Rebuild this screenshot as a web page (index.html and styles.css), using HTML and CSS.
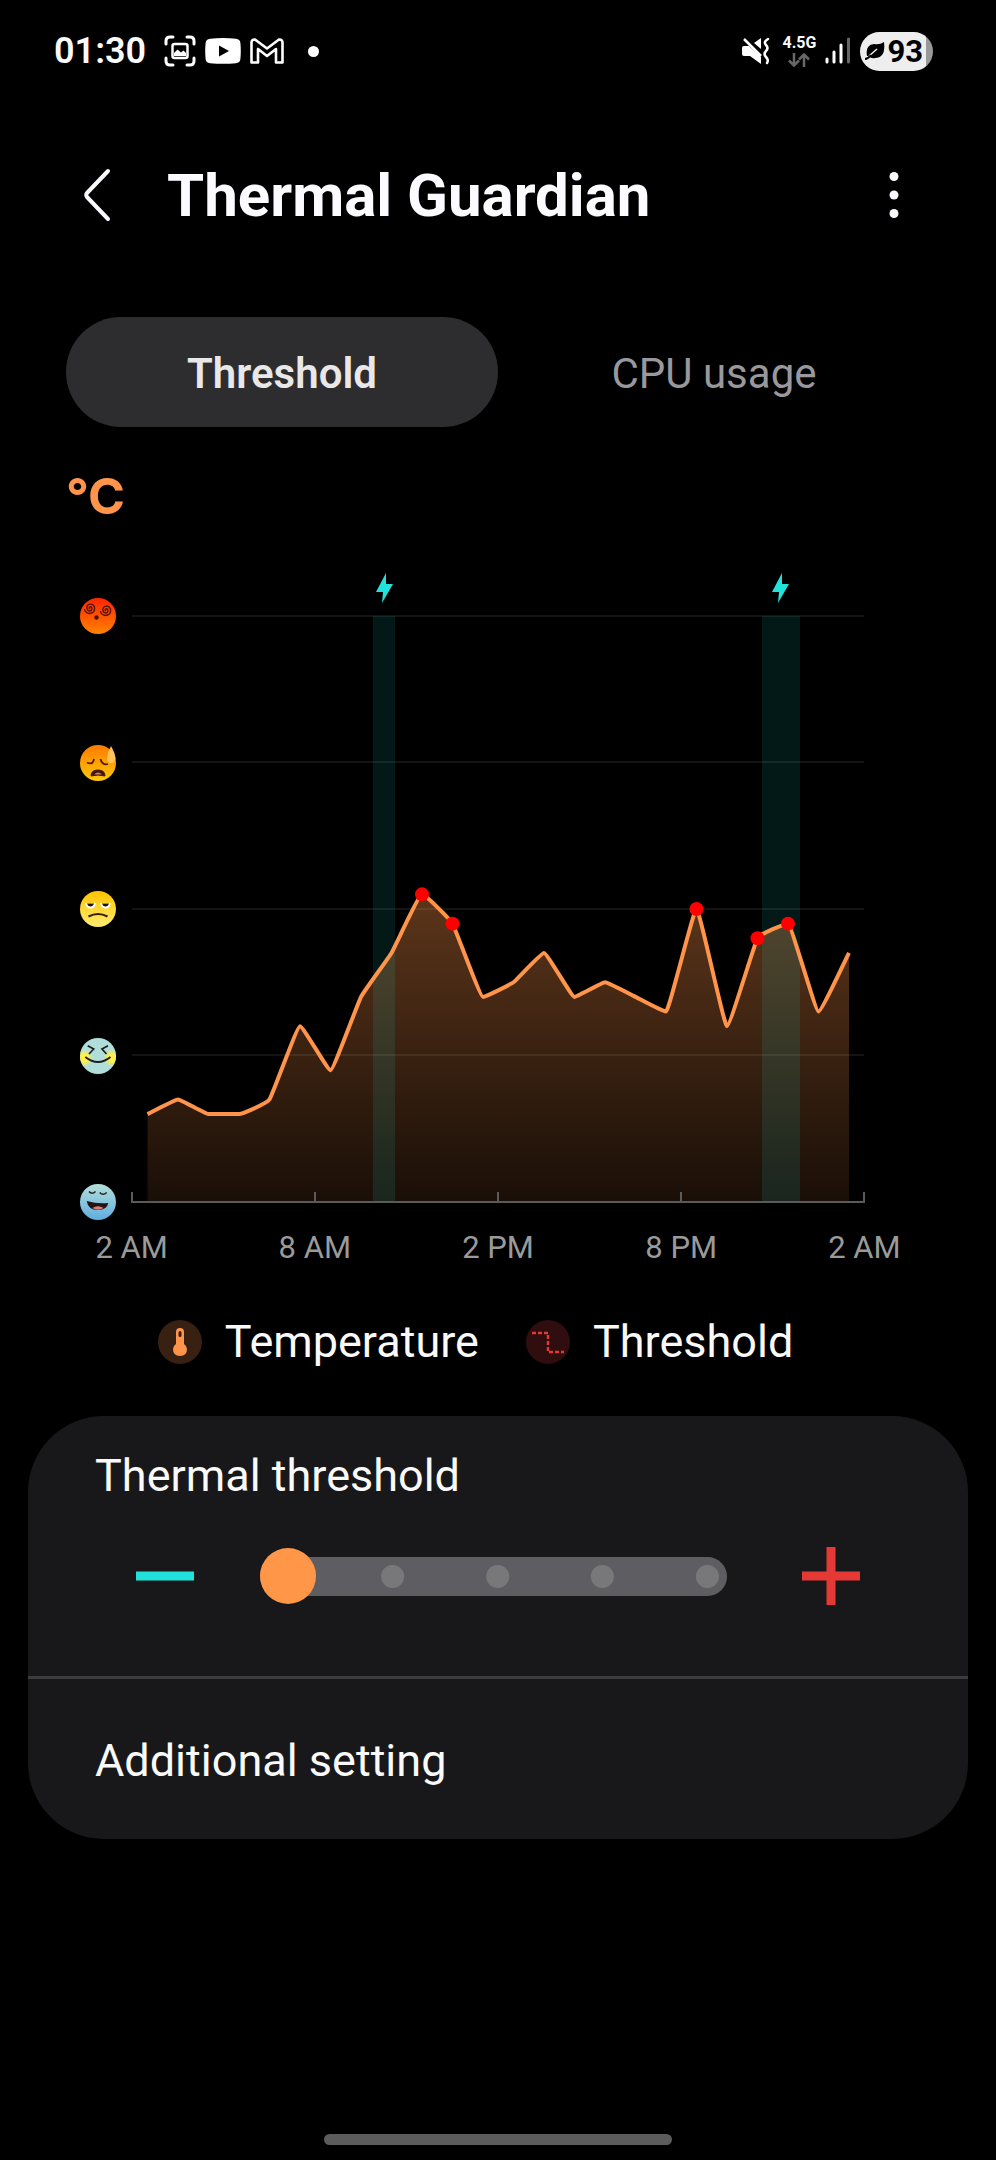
FILE: index.html
```html
<!DOCTYPE html>
<html lang="en">
<head>
  <meta charset="UTF-8" />
  <meta name="viewport" content="width=device-width, initial-scale=1.0" />
  <title>Thermal Guardian</title>
  <link rel="stylesheet" href="styles.css">
</head>
<body>

  <!-- Status bar -->
  <div class="status-bar">
    <div class="status-left">
      <span class="time">01:30</span>
      <svg width="32" height="32" viewBox="0 0 32 32" fill="none" stroke="#fff" stroke-width="3" stroke-linecap="round">
        <path d="M2 9V6Q2 2 6 2H9M23 2H26Q30 2 30 6V9M30 23V26Q30 30 26 30H23M9 30H6Q2 30 2 26V23" />
        <rect x="8.500" y="9" width="15" height="14" rx="2" stroke-width="2.500" />
        <path d="M10 21V18L13.500 14.500 17 17.500 19.500 15.500 22 18V21Z" fill="#fff" stroke="none" />
      </svg>
      <svg width="36" height="26" viewBox="0 0 36 26">
        <path d="M5 .8Q18-.6 31 .8Q35 1.200 35.400 5Q36.200 13 35.400 21Q35 24.800 31 25.200Q18 26.500 5 25.200Q1 24.800 .6 21Q-.2 13 .6 5Q1 1.200 5 .8Z" fill="#fff" />
        <path d="M14 7.500L24 13L14 18.500Z" fill="#000" />
      </svg>
      <svg width="34" height="26" viewBox="0 0 34 26" fill="none" stroke="#fff" stroke-width="2.600" stroke-linejoin="round">
        <path d="M1.500 4.500Q1.500 1.300 5 1.500L17 10.500L29 1.500Q32.500 1.300 32.500 4.500V24.500H26V11L17 18L8 11V24.500H1.500Z" />
      </svg>
      <span class="more-dot"></span>
    </div>
    <div class="status-right">
      <svg width="28" height="28" viewBox="0 0 28 28">
        <path d="M0 11Q0 9 2 9H7L19 20V27L8 19H2Q0 19 0 17Z" fill="#fff" />
        <path d="M12 6L19 1V12Z" fill="#fff" />
        <path d="M2 2L19 19" stroke="#fff" stroke-width="2.500" />
        <path d="M26 2Q21 5 24 8T24 14T24 20T25 26" fill="none" stroke="#fff" stroke-width="2.500" stroke-linecap="round" />
      </svg>
      <div class="network">
        <span>4.5G</span>
        <svg width="22" height="14" viewBox="0 0 22 14" fill="none" stroke="#686868" stroke-width="2.500">
          <path d="M6 0V12M1 7.500L6 12.500L11 7.500M16 14V2M11 6.500L16 1.500L21 6.500" />
        </svg>
      </div>
      <svg width="26" height="28" viewBox="0 0 26 28" stroke="#fff" stroke-width="3" stroke-linecap="round">
        <path d="M2 22V25M9 15V25M16 8V25" />
        <path d="M23.500 2V25" stroke="#666" />
      </svg>
      <div class="battery">
        <svg width="20" height="18" viewBox="0 0 20 18">
          <path d="M2 14Q0 3 9 2Q15 3 19 0Q21 16 10 16Q6 17 4 14Z" fill="#000" />
          <path d="M4 14L12 7" stroke="#eee" stroke-width="1.500" />
          <path d="M0 17Q3 17 6 13" fill="none" stroke="#000" stroke-width="2" />
        </svg>
        <span>93</span>
      </div>
    </div>
  </div>

  <!-- Title bar -->
  <header class="header">
    <button class="icon-button" aria-label="Back">
      <svg width="28" height="54" viewBox="0 0 28 54" fill="none" stroke="#fafaff" stroke-width="4" stroke-linecap="round" stroke-linejoin="round">
        <path d="M25 3L4 25Q2.500 27 4 29L25 51" />
      </svg>
    </button>
    <h1>Thermal Guardian</h1>
    <button class="icon-button" aria-label="More options">
      <svg width="10" height="48" viewBox="0 0 10 48" fill="#fafaff">
        <circle cx="5" cy="5.500" r="4.500" /><circle cx="5" cy="24" r="4.500" /><circle cx="5" cy="42.500" r="4.500" />
      </svg>
    </button>
  </header>

  <nav class="tabs">
    <button class="tab active">Threshold</button>
    <button class="tab">CPU usage</button>
  </nav>

  <main>
    <div class="unit">°C</div>

    <!-- Temperature chart -->
    <div class="chart">
      <div class="faces">
        <svg class="face" viewBox="0 0 36 36">
          <linearGradient id="hot" x2="0" y2="1"><stop stop-color="#ff2400" /><stop offset="1" stop-color="#ff8400" /></linearGradient>
          <circle cx="18" cy="18" r="18" fill="url(#hot)" />
          <g fill="none" stroke="#4a1208" stroke-width="1.300">
            <path d="M10 11Q8.500 10 9.500 9Q12 8 12 11Q11 14 8 12.500Q5.500 9 8.500 6.500Q13 5 14.500 9Q15.500 15 9.500 15.500Q5 15 4.500 11" />
            <path d="M26 13Q24.500 12 25.500 11Q28 10 28 13Q27 16 24 14.500Q21.500 11 24.500 8.500Q29 7 30.500 11Q31.500 17 25.500 17.500Q21 17 20.500 13" />
          </g>
          <circle cx="16.500" cy="19.500" r="2.200" fill="#4a1208" />
        </svg>
        <svg class="face" viewBox="0 0 36 36">
          <linearGradient id="warm" x2="0" y2="1"><stop stop-color="#ff7a00" /><stop offset="1" stop-color="#ffca08" /></linearGradient>
          <circle cx="18" cy="18" r="18" fill="url(#warm)" />
          <path d="M7 17.500Q13 20.500 14 14M20.500 14Q22 20.500 28 19" fill="none" stroke="#4d1d08" stroke-width="1.800" />
          <path d="M11 31Q11 25 18 25T25 31Q18 29 11 31Z" fill="#40150c" stroke="#40150c" />
          <path d="M14 29.500Q18 25.500 22 29.500Z" fill="#d57a78" />
          <path d="M31 1Q35 8 35.500 13Q35 18 31 18T27 13Q27.500 7 31 1Z" fill="#ffc45a" />
        </svg>
        <svg class="face" viewBox="0 0 36 36">
          <linearGradient id="mild" x2="0" y2="1"><stop stop-color="#ffc400" /><stop offset="1" stop-color="#ffed70" /></linearGradient>
          <circle cx="18" cy="18" r="18" fill="url(#mild)" />
          <path d="M5 12H16Q15 17.500 10.500 17.500T5 12ZM20 12H31Q30 17.500 25.500 17.500T20 12Z" fill="#fff" />
          <path d="M7 12.500H14Q13 15.500 10.500 15.500T7 12.500ZM22 12.500H29Q28 15.500 25.500 15.500T22 12.500Z" fill="#201000" />
          <path d="M8.500 25.500Q18 20.500 27.500 25.500" fill="none" stroke="#332000" stroke-width="2.200" />
        </svg>
        <svg class="face" viewBox="0 0 36 36">
          <radialGradient id="blush"><stop offset=".4" stop-color="#fff14a" /><stop offset="1" stop-color="#fff14a" stop-opacity="0" /></radialGradient>
          <clipPath id="disc"><circle cx="18" cy="18" r="18" /></clipPath>
          <g clip-path="url(#disc)">
            <rect width="36" height="36" fill="#b0dedb" />
            <circle cx="4" cy="20" r="9" fill="url(#blush)" /><circle cx="32" cy="20" r="9" fill="url(#blush)" />
          </g>
          <path d="M7.700 7.700L13.700 11L9 16M28 7.700L22 11L26.500 16M5.300 19Q18 29 30.500 19" fill="none" stroke="#221c1c" stroke-width="1.700" />
        </svg>
        <svg class="face" viewBox="0 0 36 36">
          <linearGradient id="cool" x2="0" y2="1"><stop stop-color="#b4dfda" /><stop offset="1" stop-color="#5eaee0" /></linearGradient>
          <circle cx="18" cy="18" r="18" fill="url(#cool)" />
          <path d="M9 7.500Q12 11 15.500 7.500M19.700 8.500Q23 12 26.700 8.500" fill="none" stroke="#222" stroke-width="1.600" />
          <path d="M6.700 17Q17 20 28.300 19Q27 26 18 26Q8 26 6.700 17Z" fill="#241515" />
          <path d="M12.500 24Q18 20.500 23.500 24Q18 27.500 12.500 24Z" fill="#dc7c7c" />
        </svg>
      </div>
      <svg class="plot" viewBox="0 0 732 656" role="img" aria-label="Temperature over the last 24 hours">
        <defs>
          <linearGradient id="area" x2="0" y2="1">
            <stop stop-color="#ff944a" stop-opacity=".36" />
            <stop offset="1" stop-color="#ff944a" stop-opacity=".1" />
          </linearGradient>
        </defs>
        <path class="grid-line" d="M0 52H732M0 198H732M0 345H732M0 491H732" />
        <path id="fill" fill="url(#area)" />
        <g class="charging">
          <rect x="241" y="52" width="22" height="586" />
          <rect x="630" y="52" width="38" height="586" />
        </g>
        <g class="bolt">
          <path d="M254 9L244 28H251L250 39L261 20H254Z" />
          <path d="M650 9L640 28H647L646 39L657 20H650Z" />
        </g>
        <path class="axis" d="M0 628V638H732V628M183 628V638M366 628V638M549 628V638" />
        <path id="line" class="line" />
        <g id="dots" class="dots"></g>
      </svg>
    </div>
    <div class="hours">
      <span>2 AM</span><span>8 AM</span><span>2 PM</span><span>8 PM</span><span>2 AM</span>
    </div>

    <div class="legend">
      <div class="legend-item">
        <svg width="44" height="44" viewBox="0 0 44 44">
          <circle cx="22" cy="22" r="22" fill="#382012" />
          <path d="M18 24V12Q18 8 22 8T26 12V24Q29 26 29 29Q29 36 22 36T15 29Q15 26 18 24Z" fill="#ff944a" />
          <rect x="20.500" y="11" width="3" height="6" rx="1.500" fill="#382012" />
        </svg>
        <span>Temperature</span>
      </div>
      <div class="legend-item">
        <svg width="44" height="44" viewBox="0 0 44 44">
          <circle cx="22" cy="22" r="22" fill="#300d0f" />
          <path d="M6 13H22V32H38" fill="none" stroke="#e53935" stroke-width="2.400" stroke-dasharray="4 2" />
        </svg>
        <span>Threshold</span>
      </div>
    </div>

    <!-- Settings card -->
    <section class="card">
      <div class="threshold">
        <label for="threshold">Thermal threshold</label>
        <div class="slider-row">
          <button class="step minus" aria-label="Lower threshold">
            <svg width="58" height="58" viewBox="0 0 58 58"><path d="M0 29H58" /></svg>
          </button>
          <input id="threshold" class="slider" type="range" min="0" max="4" step="1" value="0">
          <button class="step plus" aria-label="Raise threshold">
            <svg width="58" height="58" viewBox="0 0 58 58"><path d="M0 29H58M29 0V58" /></svg>
          </button>
        </div>
      </div>
      <a class="additional" href="#">Additional setting</a>
    </section>
  </main>

  <div class="home-bar"></div>

  <script src="script.js"></script>
</body>
</html>
```
FILE: styles.css
```css
* {
  box-sizing: border-box;
}

body {
  margin: 0;
  min-height: 100vh;
  display: flex;
  flex-direction: column;
  background: #000;
  color: #fafafa;
  font-family: Roboto, sans-serif;
  font-size: 45px;
}

button {
  padding: 0;
  border: none;
  background: none;
  color: inherit;
  font: inherit;
  cursor: pointer;
}

svg {
  display: block;
  flex-shrink: 0;
}

.status-bar {
  display: flex;
  justify-content: space-between;
  align-items: center;
  height: 102px;
  padding: 0 63px 0 54px;
}

.status-left,
.status-right {
  display: flex;
  align-items: center;
  gap: 9px;
}

.time {
  margin-right: 9px;
  font-size: 36px;
  font-weight: 600;
}

.more-dot {
  width: 11px;
  height: 11px;
  margin-left: 15px;
  border-radius: 50%;
  background: #fff;
}

.network {
  display: flex;
  flex-direction: column;
  align-items: center;
  gap: 2px;
  font-size: 16px;
  line-height: 16px;
  font-weight: 700;
}

.status-right .network {
  margin-left: 4px;
}

.battery {
  display: flex;
  align-items: center;
  gap: 2px;
  height: 39px;
  padding: 0 10px 0 5px;
  border-radius: 20px;
  background: linear-gradient(to right, #eee 91%, #999 91%);
  color: #000;
  font-size: 31px;
  font-weight: 700;
}

.header {
  display: flex;
  align-items: center;
  height: 186px;
  padding: 0 70px 0 65px;
}

.header h1 {
  flex: 1;
  margin: 0 0 0 38px;
  font-size: 60px;
  font-weight: 700;
  color: #fafaff;
}

.icon-button {
  display: flex;
  justify-content: center;
  width: 64px;
}

.tabs {
  display: flex;
  margin: 29px 66px 0;
}

.tab {
  flex: 1;
  height: 110px;
  padding-top: 2px;
  border-radius: 55px;
  font-size: 42px;
  color: #98989d;
}

.tab.active {
  background: #2d2d2f;
  color: #e8e8e8;
  font-weight: 600;
}

.unit {
  margin: 39px 66px 0;
  font-family: Inter, sans-serif;
  font-size: 50px;
  line-height: 60px;
  font-weight: 700;
  color: #ff944a;
}

.chart {
  display: grid;
  grid-template-columns: 52px 1fr;
  margin: 38px 132px 0 80px;
}

.faces {
  display: flex;
  flex-direction: column;
  justify-content: space-between;
  padding-top: 34px;
}

.face {
  width: 36px;
  height: 36px;
}

.plot {
  width: 100%;
  height: auto;
  overflow: visible;
}

.grid-line {
  fill: none;
  stroke: #141414;
  stroke-width: 2;
}

.charging {
  fill: #1ce0d8;
  fill-opacity: 0.11;
}

.bolt {
  fill: #22e3db;
}

.axis {
  fill: none;
  stroke: #5a5a5a;
  stroke-width: 2;
}

.line {
  fill: none;
  stroke: #ff944a;
  stroke-width: 4;
  stroke-linejoin: round;
}

.dots {
  fill: #f00;
}

.hours {
  display: grid;
  grid-template-columns: repeat(5, 1fr);
  margin: 10px 40px 0;
  font-size: 31px;
  line-height: 36px;
  text-align: center;
  color: #9a9a9a;
}

.legend {
  display: flex;
  justify-content: center;
  gap: 47px;
  margin-top: 50px;
  padding-right: 45px;
}

.legend-item {
  display: flex;
  align-items: center;
  gap: 23px;
  line-height: 52px;
}

.card {
  margin: 48px 28px 0;
  border-radius: 76px;
  background: #18181a;
}

.threshold {
  padding: 34px 67px 71px;
  border-bottom: 3px solid #3c3c3e;
}

.threshold label {
  display: block;
  line-height: 52px;
}

.slider-row {
  display: flex;
  align-items: center;
  gap: 66px;
  margin: 45px 41px 0;
}

.step svg {
  fill: none;
  stroke-width: 9;
}

.minus {
  stroke: #20e2da;
}

.plus {
  stroke: #e53935;
}

.slider {
  flex: 1;
  min-width: 0;
  height: 39px;
  margin: 0 9px 0 0;
  border-radius: 20px;
  appearance: none;
  background:
    radial-gradient(circle at 28.4% 50%, #78787a 11px, transparent 12px),
    radial-gradient(circle at 50.9% 50%, #78787a 11px, transparent 12px),
    radial-gradient(circle at 73.3% 50%, #78787a 11px, transparent 12px),
    radial-gradient(circle at 95.8% 50%, #78787a 11px, transparent 12px),
    #5e5e62;
}

.slider::-webkit-slider-thumb {
  appearance: none;
  width: 56px;
  height: 56px;
  border-radius: 50%;
  background: #ff9648;
}

.additional {
  display: block;
  padding: 58px 67px 54px;
  line-height: 48px;
  color: inherit;
  text-decoration: none;
}

.home-bar {
  width: 35%;
  height: 11px;
  margin: auto auto 15px;
  border-radius: 6px;
  background: #5c5c5c;
}
```
FILE: script.js
```js
// one reading per hour, 40 steps from the bottom line to the top one
const readings = [6, 7, 6, 6, 7, 12, 9, 14, 17, 21, 19, 14, 15, 17, 14, 15, 14, 13, 20, 12, 18, 19, 13, 17];
const hot = [9, 10, 18, 20, 21];

const points = readings.map((value, i) => ({ x: 15.5 + i * 30.5, y: 638 - value * 14.65 }));

// flat at peaks and dips, average slope elsewhere
function slope(i) {
  const a = points[i - 1], b = points[i], c = points[i + 1];
  if (!a || !c) return ((c || b).y - (a || b).y) / 30.5;
  if ((b.y - a.y) * (c.y - b.y) <= 0) return 0;
  return (c.y - a.y) / 61;
}

let path = `M${points[0].x} ${points[0].y}`;
for (let i = 1; i < points.length; i++) {
  const a = points[i - 1], b = points[i], h = 3;
  path += `C${a.x + h} ${a.y + slope(i - 1) * h} ${b.x - h} ${b.y - slope(i) * h} ${b.x} ${b.y}`;
}

document.getElementById('line').setAttribute('d', path);
document.getElementById('fill').setAttribute('d', `${path}V638H${points[0].x}Z`);
document.getElementById('dots').innerHTML = hot
  .map(i => `<circle cx="${points[i].x}" cy="${points[i].y}" r="7" />`)
  .join('');
```
